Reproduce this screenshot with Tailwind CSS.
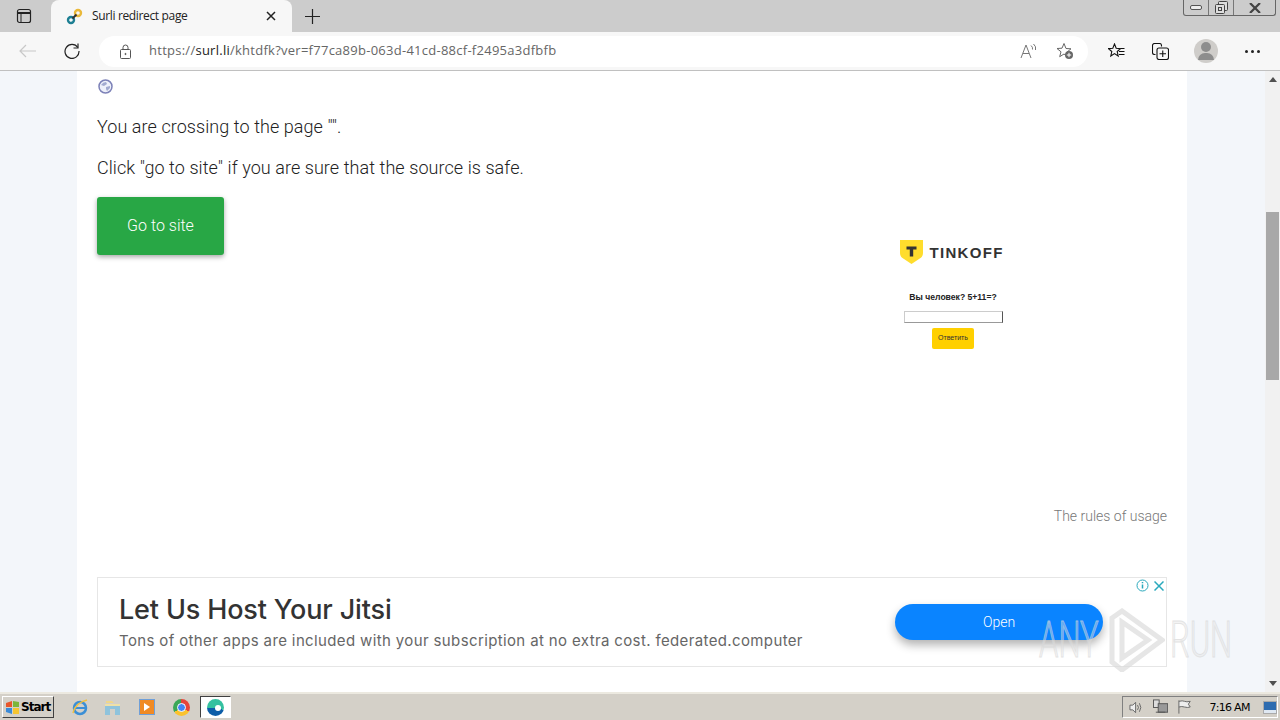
<!DOCTYPE html>
<html lang="en">

<head>
    <meta charset="UTF-8">
    <meta name="viewport" content="width=device-width, initial-scale=1.0">
    <title>Surli redirect page</title>
    <script src="https://cdn.jsdelivr.net/npm/@tailwindcss/browser@4"></script>
</head>

<body class="h-[720px] w-[1280px] overflow-hidden flex flex-col relative font-['Roboto',sans-serif]">
    <!-- tab strip -->
    <div class="h-8 bg-[#cccccc] flex items-end shrink-0 relative">
        <div class="w-[51px] h-8 flex items-center justify-center pr-[3px]">
            <svg class="w-4 h-4" viewBox="0 0 16 16" fill="none" stroke="#222" stroke-width="1.2">
                <rect x="1.5" y="1.5" width="13" height="13" rx="2"></rect>
                <path d="M1.5 5h13" stroke-width="2"></path>
                <path d="M5 5v9" stroke-width="1"></path>
            </svg>
        </div>
        <div class="w-[241px] h-[32px] bg-[#f7f7f7] rounded-t-lg flex items-center pl-[15px] pr-[16px]">
            <svg class="w-[17px] h-[17px] shrink-0" viewBox="0 0 17 17" fill="none" stroke-width="2.4">
                <circle cx="5" cy="12" r="3" stroke="#1d7f93"></circle>
                <circle cx="12" cy="5" r="3" stroke="#eab93a"></circle>
                <path d="M6.5 10.5l4-4" stroke="#333" stroke-width="2"></path>
            </svg>
            <span class="ml-[9px] text-[12px] text-[#222] flex-1 font-['Open_Sans',sans-serif] tracking-[-0.35px]">Surli redirect page</span>
            <svg class="w-[10px] h-[10px]" viewBox="0 0 10 10" stroke="#222" stroke-width="1.5">
                <path d="M1 1l8 8M9 1l-8 8"></path>
            </svg>
        </div>
        <div class="w-[40px] h-8 flex items-center justify-center">
            <svg class="w-[15px] h-[15px]" viewBox="0 0 15 15" stroke="#222" stroke-width="1.2">
                <path d="M7.5 0v15M0 7.5h15"></path>
            </svg>
        </div>
        <!-- window buttons -->
        <div class="absolute right-[4px] top-0 w-[93px] h-4 border border-t-0 border-[#666] rounded-b-[3px] flex">
            <div class="w-[25px] border-r border-[#777] flex items-center justify-center">
                <div class="w-[12px] h-[5px] border border-[#555] rounded-[2px] bg-[#eee]"></div>
            </div>
            <div class="w-[25px] border-r border-[#777] flex items-center justify-center">
                <svg class="w-[13px] h-[13px]" viewBox="0 0 13 13" fill="#ddd" stroke="#444">
                    <rect x="3.5" y="0.5" width="9" height="9" rx="1"></rect>
                    <rect x="0.5" y="3.5" width="9" height="9" rx="1"></rect>
                    <rect x="3.5" y="6.5" width="3" height="3"></rect>
                </svg>
            </div>
            <div class="flex-1 flex items-center justify-center">
                <svg class="w-[12px] h-[10px]" viewBox="0 0 12 10" stroke="#444" stroke-width="2.2">
                    <path d="M1 0l10 10M11 0L1 10"></path>
                </svg>
            </div>
        </div>
    </div>

    <!-- address bar -->
    <div class="h-[39px] bg-[#f7f7f7] border-b border-[#c0c0c0] flex items-center shrink-0">
        <div class="w-[56px] flex justify-center">
            <svg class="w-[18px] h-[14px]" viewBox="0 0 18 14" fill="none" stroke="#c8c8c8" stroke-width="1.2">
                <path d="M17 7H1M7 1L1 7l6 6"></path>
            </svg>
        </div>
        <div class="w-[32px] flex justify-center">
            <svg class="w-[16px] h-[16px]" viewBox="0 0 16 16" fill="none" stroke="#222" stroke-width="1.2">
                <path d="M13.8 4.5A7 7 0 1 0 15 8"></path>
                <path d="M14 0.5v4.5H9.5"></path>
            </svg>
        </div>
        <div class="ml-[11px] w-[989px] h-[31px] bg-white rounded-full flex items-center">
            <svg class="ml-[20px] w-[13px] h-[15px] shrink-0" viewBox="0 0 13 15" fill="none" stroke="#555" stroke-width="1">
                <rect x="1.5" y="5.5" width="10" height="9" rx="1"></rect>
                <path d="M4 5.5V3.5a2.5 2.5 0 0 1 5 0v2"></path>
                <circle cx="6.5" cy="10" r="0.6" fill="#555"></circle>
            </svg>
            <div class="ml-[17px] text-[13px] text-[#666] font-['Open_Sans',sans-serif] tracking-[0.26px] whitespace-nowrap flex-1">https://<span class="text-[#222]">surl.li</span>/khtdfk?ver=f77ca89b-063d-41cd-88cf-f2495a3dfbfb</div>
            <svg class="w-[17px] h-[16px] shrink-0" viewBox="0 0 17 16" fill="none" stroke="#777" stroke-width="1">
                <path d="M1 15L6 2l5 13M3 10.5h6"></path>
                <path d="M11 2.5q2 1.5 1.5 4M13.5 1q3 2.500 2 6"></path>
            </svg>
            <svg class="ml-[19px] mr-[14px] w-[18px] h-[18px] shrink-0" viewBox="0 0 18 18">
                <path d="M8 1.500l2 5 5 .3-4 3.300 1.300 5L8 12l-4.300 2.700L5 9.800 1 6.500l5-.3z" fill="none" stroke="#666"></path>
                <circle cx="13" cy="13" r="4" fill="#666"></circle>
                <path d="M13 10.800v4.400M10.800 13h4.400" stroke="#fff"></path>
            </svg>
        </div>
        <div class="ml-[18px] w-[20px] flex justify-center">
            <svg class="w-[17px] h-[16px]" viewBox="0 0 17 16" fill="none" stroke="#111" stroke-width="1.100">
                <path d="M6.500 1l1.700 4.300 4.300.3-3.300 2.900 1 4.500-3.700-2.400L2.800 13l1-4.500L.5 5.600l4.300-.3z"></path>
                <path d="M11 8.500h5.500M11 11.500h5.500M12.500 5.500h4"></path>
            </svg>
        </div>
        <div class="ml-[24px] w-[20px] flex justify-center">
            <svg class="w-[17px] h-[17px]" viewBox="0 0 17 17" fill="none" stroke="#111" stroke-width="1.100">
                <path d="M3.500 11.500H2.500a2 2 0 0 1-2-2V2.500a2 2 0 0 1 2-2h5a2 2 0 0 1 2 2v1"></path>
                <rect x="5" y="5" width="11.500" height="11.500" rx="2" fill="#f7f7f7"></rect>
                <path d="M10.750 7.500v6.500M7.500 10.750H14"></path>
            </svg>
        </div>
        <div class="ml-[24px] w-[24px] h-[24px] rounded-full bg-[#cfcdca] flex flex-col items-center justify-center overflow-hidden">
            <div class="w-[10px] h-[10px] rounded-full bg-[#8d8d8d]"></div>
            <div class="w-[16px] h-[7px] rounded-t-full bg-[#8d8d8d] mt-[1px]"></div>
        </div>
        <div class="ml-[27px] flex gap-[3px]">
            <div class="w-[3px] h-[3px] rounded-full bg-[#222]"></div>
            <div class="w-[3px] h-[3px] rounded-full bg-[#222]"></div>
            <div class="w-[3px] h-[3px] rounded-full bg-[#222]"></div>
        </div>
    </div>

    <!-- page -->
    <div class="flex-1 flex min-h-0 bg-[#f3f6fa]">
        <div class="ml-[77px] w-[1110px] bg-white px-[20px] pt-[8px]">
            <svg class="ml-[1px] w-[15px] h-[15px]" viewBox="0 0 15 15">
                <circle cx="7.500" cy="7.500" r="6.500" fill="#eef0fa" stroke="#7d82b8" stroke-width="1.500"></circle>
                <path d="M3 6q2-3 5-3l1 2-3 2zM8 8l4-1 0 2-3 3-1-2z" fill="#a3abd0"></path>
            </svg>
            <p class="mt-[19px] text-[18px] leading-[27px] font-light tracking-[0.07px] text-[#222]">You are crossing to the page "".</p>
            <p class="mt-[14px] text-[18px] leading-[27px] font-light tracking-[0.07px] text-[#222]">Click "go to site" if you are sure that the source is safe.</p>
            <div class="flex justify-between items-start">
                <button class="mt-[16px] w-[127px] h-[58px] bg-[#28a745] text-white text-[16px] font-light rounded-[3px] shadow-[0_2px_5px_rgba(0,0,0,0.35)]">Go to site</button>
                <!-- captcha preview -->
                <div class="mt-[59px] mr-[160px] w-[108px] flex flex-col items-center">
                    <div class="flex items-center w-[105px] -ml-[2px]">
                        <svg class="w-[23px] h-[24px] shrink-0" viewBox="0 0 23 24">
                            <path d="M0 0h23v13q0 4-4 6l-7.500 5L4 19q-4-2-4-6z" fill="#ffdd2d"></path>
                            <path d="M6.500 6.500h10v3h-3.300v7h-3.400v-7H6.500z" fill="#333"></path>
                        </svg>
                        <span class="ml-[7px] text-[15px] leading-none font-bold text-[#333] font-['Liberation_Sans',sans-serif] tracking-[1.3px] whitespace-nowrap">TINKOFF</span>
                    </div>
                    <div class="mt-[27px] text-[8.6px] leading-[12px] font-bold text-[#222] font-['Liberation_Sans',sans-serif]">Вы человек? 5+11=?</div>
                    <div class="mt-[8px] w-[99px] h-[12px] border border-[#ccc] border-r-[#555] border-b-[#999] bg-white"></div>
                    <button class="mt-[5px] w-[42px] h-[21px] bg-[#ffd000] rounded-[2px] text-[7px] text-[#333] font-['Liberation_Sans',sans-serif]">Ответить</button>
                </div>
            </div>
            <div class="mt-[157px] text-right text-[14px] leading-[20px] font-light text-[#777]">The rules of usage</div>
            <!-- ad banner -->
            <div class="mt-[51px] h-[90px] border border-[#e6e6e6] flex items-center relative">
                <div class="ml-[21px] flex-1">
                    <div class="text-[27px] leading-[34px] font-medium tracking-[-0.15px] text-[#333] font-['Inter',sans-serif]">Let Us Host Your Jitsi</div>
                    <div class="mt-[4px] text-[15px] leading-[20px] text-[#666] font-['Inter',sans-serif] tracking-[0.37px]">Tons of other apps are included with your subscription at no extra cost. federated.computer</div>
                </div>
                <button class="mr-[63px] w-[208px] h-[36px] rounded-full bg-[#0a84ff] text-white text-[14px] font-light shadow-[0_5px_10px_rgba(0,0,0,0.3)]">Open</button>
                <div class="absolute right-[2px] top-[1px] flex items-center gap-[5px]">
                    <svg class="w-[13px] h-[13px]" viewBox="0 0 13 13" fill="none" stroke="#2aa9bd">
                        <circle cx="6.500" cy="6.500" r="5.500"></circle>
                        <path d="M6.500 5.500v4M6.500 3v1.200" stroke-width="1.500"></path>
                    </svg>
                    <svg class="w-[10px] h-[10px]" viewBox="0 0 10 10" stroke="#2aa9bd" stroke-width="1.500">
                        <path d="M.5.500l9 9M9.500.500l-9 9"></path>
                    </svg>
                </div>
            </div>
        </div>
        <div class="flex-1"></div>
        <!-- scrollbar -->
        <div class="w-[15px] bg-[#f1f1f1] relative flex flex-col items-center justify-between py-[6px]">
            <div class="w-0 h-0 border-x-[4px] border-x-transparent border-b-[5px] border-b-[#505050]"></div>
            <div class="absolute left-[1px] top-[141px] w-[13px] h-[168px] bg-[#a8a8a8]"></div>
            <div class="w-0 h-0 border-x-[4px] border-x-transparent border-t-[5px] border-t-[#505050]"></div>
        </div>
    </div>

    <!-- taskbar -->
    <div class="h-[28px] bg-[#d4d0c8] border-t-2 border-t-[#ece9e0] flex items-center shrink-0">
        <div class="ml-[2px] w-[52px] h-[22px] bg-[#d4d0c8] border border-white border-r-[#404040] border-b-[#404040] flex items-center pl-[2px]">
            <svg class="w-[15px] h-[15px] shrink-0" viewBox="0 0 15 15">
                <path d="M1 3l6-2v6H1z" fill="#e8562a"></path>
                <path d="M8 1l6 1v5H8z" fill="#7cb53a"></path>
                <path d="M1 8h6v6l-6-2z" fill="#3a8ad8"></path>
                <path d="M8 8h6v6H8z" fill="#f5c531"></path>
            </svg>
            <span class="ml-[1px] text-[12px] leading-none font-bold text-black font-['DejaVu_Sans',sans-serif] tracking-[-1px]">Start</span>
        </div>
        <!-- ie -->
        <svg class="ml-[17px] w-[18px] h-[18px]" viewBox="0 0 18 18" fill="none">
            <circle cx="9" cy="10" r="6" stroke="#3b8fd6" stroke-width="2.500"></circle>
            <path d="M3 10h12" stroke="#3b8fd6" stroke-width="2"></path>
            <path d="M2 15Q4 5 16 2" stroke="#f0c040" stroke-width="1.500"></path>
        </svg>
        <!-- explorer -->
        <svg class="ml-[15px] w-[17px] h-[17px]" viewBox="0 0 17 17">
            <path d="M2 2h6l2 2H2z" fill="#f0d78a"></path>
            <path d="M1 5h15v11H1z" fill="#8fc3dc"></path>
            <path d="M6 10h5v6H6z" fill="#d4d0c8"></path>
            <path d="M1 5h15v2H1z" fill="#efe0a8"></path>
        </svg>
        <!-- media player -->
        <div class="ml-[18px] w-[16px] h-[16px] border border-[#6f9fd8] bg-[#f08a24] flex items-center justify-center">
            <div class="w-0 h-0 border-y-[4px] border-y-transparent border-l-[6px] border-l-white"></div>
        </div>
        <!-- chrome -->
        <div class="ml-[18px] w-[17px] h-[17px] rounded-full bg-[conic-gradient(#e5453a_0_33%,#fbc22d_33%_66%,#3aa757_66%)] flex items-center justify-center">
            <div class="w-[7px] h-[7px] rounded-full bg-[#4285f4] border border-white box-content"></div>
        </div>
        <!-- edge, active -->
        <div class="ml-[10px] w-[31px] h-[22px] bg-white border border-[#404040] border-r-white border-b-white flex items-center justify-center">
            <div class="w-[17px] h-[17px] rounded-full bg-[conic-gradient(#35c1a0_0_30%,#0d5da8_30%_75%,#35c1a0_75%)] flex items-center justify-center">
                <div class="w-[6px] h-[6px] rounded-full bg-white ml-[4px] mt-[2px]"></div>
            </div>
        </div>
        <!-- tray -->
        <div class="ml-auto mr-[2px] w-[156px] h-[22px] border border-[#808080] border-r-white border-b-white flex items-center pl-[6px]">
            <svg class="w-[16px] h-[15px]" viewBox="0 0 16 15" fill="none" stroke="#666">
                <path d="M1 5h3l3-3v11l-3-3H1z" fill="#eee"></path>
                <path d="M9 5q2 2.500 0 5M11 3q3 4.500 0 9"></path>
            </svg>
            <svg class="ml-[9px] w-[16px] h-[16px]" viewBox="0 0 16 16" fill="#ddd" stroke="#555">
                <rect x="0.500" y="0.500" width="6" height="8"></rect>
                <rect x="5.500" y="4.500" width="10" height="9" fill="#999"></rect>
                <path d="M3 13.500h10"></path>
            </svg>
            <svg class="ml-[9px] w-[16px] h-[16px]" viewBox="0 0 16 16" fill="none" stroke="#666">
                <path d="M2 1v14M2 2q4-1 6 0t6 0l-2 3 2 3q-3 1-6 0t-6 0" fill="#eee"></path>
            </svg>
            <span class="ml-[17px] text-[11px] leading-none text-black font-['DejaVu_Sans',sans-serif] tracking-[-0.7px] whitespace-nowrap">7:16 AM</span>
            <div class="ml-[13px] w-[15px] h-[13px] bg-[linear-gradient(#2e6cb0_70%,#dfe8f2_70%)] border border-[#aaa]"></div>
        </div>
    </div>

    <!-- watermark -->
    <div class="absolute left-[1039px] top-[608px] flex items-center opacity-70 pointer-events-none">
        <span class="inline-block w-[64px] origin-left scale-x-[0.62] whitespace-nowrap text-[50px] leading-none font-light text-[#e4e4e4]/60 [-webkit-text-stroke:1px_#d8d8d8]">ANY</span>
        <svg class="ml-[6px] w-[56px] h-[64px]" viewBox="0 0 56 64" fill="none" stroke="#dcdcdc" stroke-width="5">
            <path d="M3 10v44l10 8 40-30L13 3zM13 14v36l26-18z"></path>
        </svg>
        <span class="ml-[5px] inline-block w-[60px] origin-left scale-x-[0.62] whitespace-nowrap text-[50px] leading-none font-light text-[#e4e4e4]/60 [-webkit-text-stroke:1px_#d8d8d8]">RUN</span>
    </div>
</body>

</html>
